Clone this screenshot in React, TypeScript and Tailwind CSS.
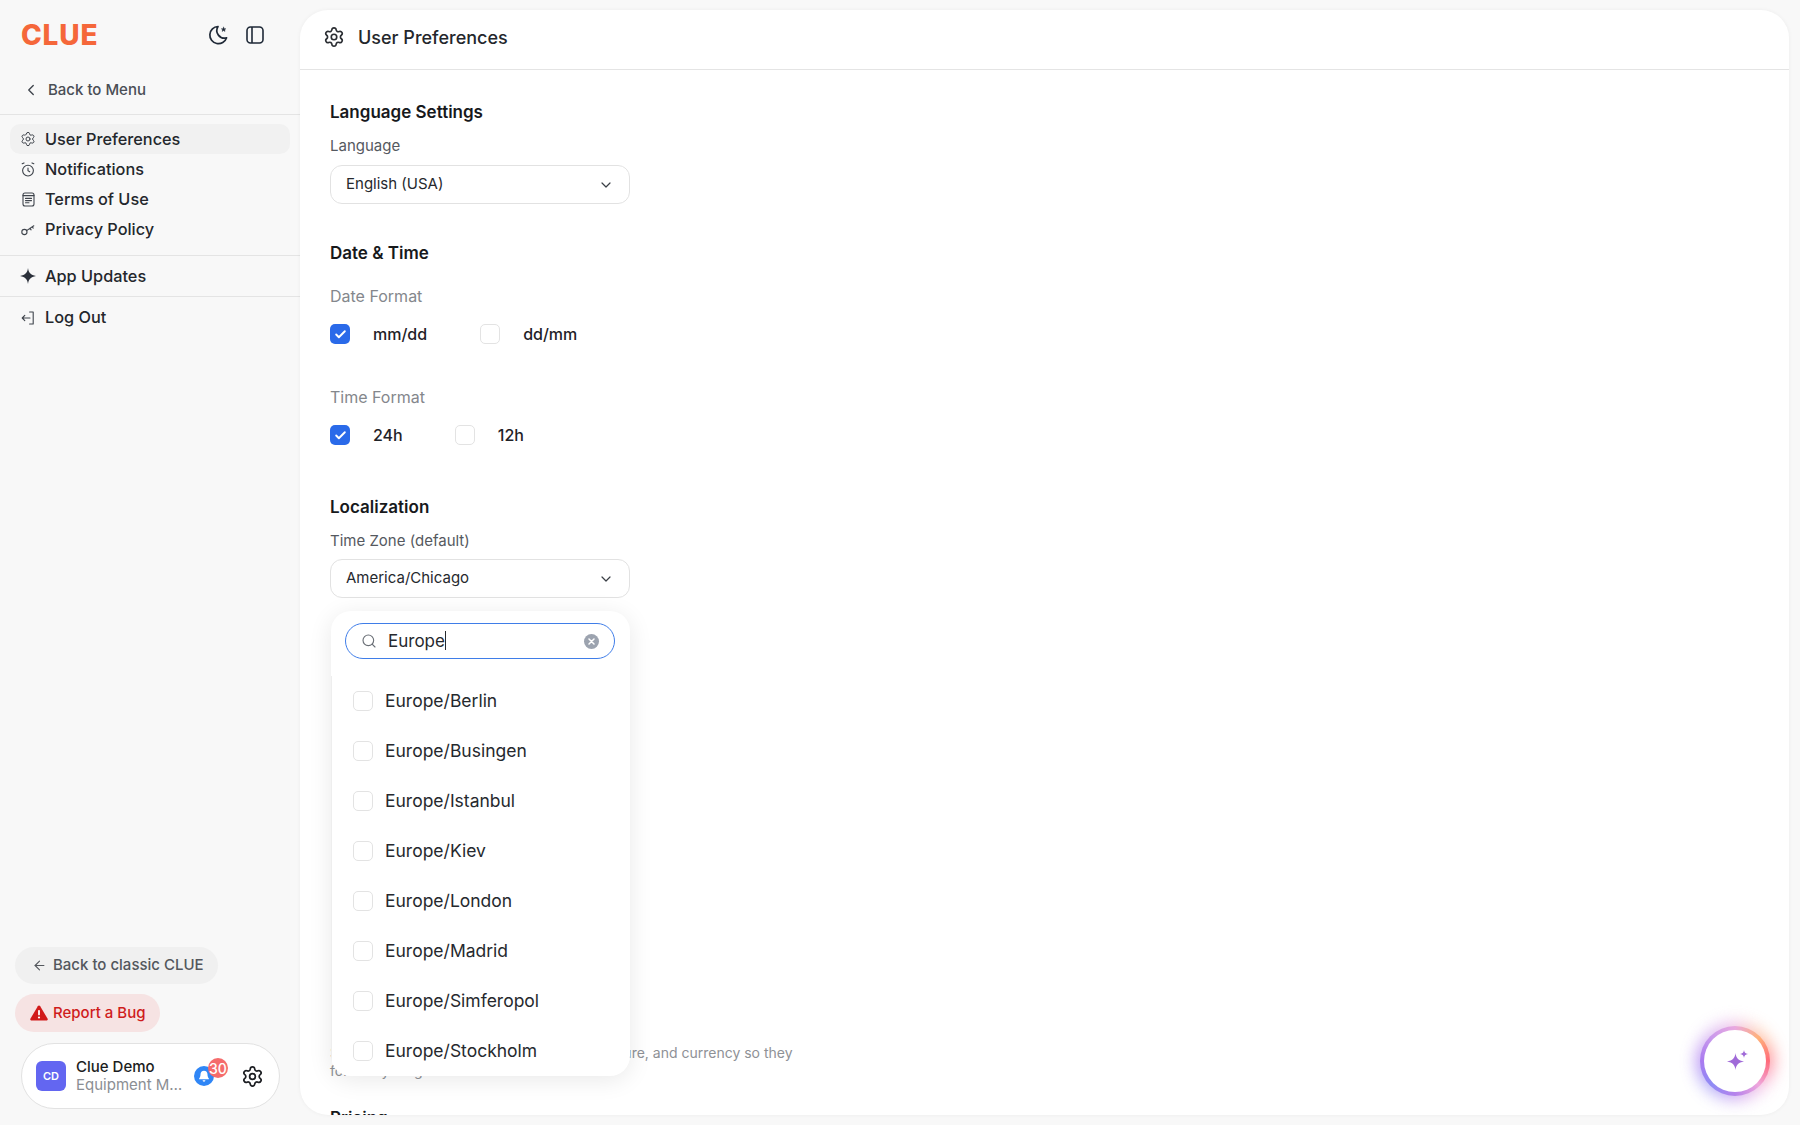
import { ChevronDown, ChevronLeft, ArrowLeft, Check, Search, Settings } from 'lucide-react'

const font = { fontFamily: 'Inter, "Noto Sans", sans-serif' }

const zones = [
  'Europe/Berlin',
  'Europe/Busingen',
  'Europe/Istanbul',
  'Europe/Kiev',
  'Europe/London',
  'Europe/Madrid',
  'Europe/Simferopol',
  'Europe/Stockholm',
]

function MoonStar() {
  return (
    <svg width="22" height="22" viewBox="0 0 22 22" fill="none" stroke="#1f2937" strokeWidth="1.7" strokeLinecap="round" strokeLinejoin="round">
      <path d="M11 2.5a8.6 8.6 0 1 0 8.6 11.3A7.6 7.6 0 0 1 11 2.5Z" />
      <path d="M16.6 3.2l.6 1.5 1.6.1-1.2 1 .4 1.6-1.4-.9-1.4.9.4-1.6-1.2-1 1.6-.1Z" fill="#1f2937" strokeWidth="0.5" />
    </svg>
  )
}

function PanelIcon() {
  return (
    <svg width="18" height="18" viewBox="0 0 18 18" fill="none" stroke="#1f2937" strokeWidth="1.6">
      <rect x="1" y="1" width="16" height="16" rx="3.5" />
      <path d="M6 1v16" />
    </svg>
  )
}

function AlarmIcon() {
  return (
    <svg width="14" height="15" viewBox="0 0 14 15" fill="none" stroke="#3f444c" strokeWidth="1.1" strokeLinecap="round">
      <circle cx="7" cy="8.6" r="5.4" />
      <path d="M7 6v2.8l1.7 1" />
      <path d="M1.2 1.8 3 .9M12.8 1.8 11 .9" />
    </svg>
  )
}

function DocIcon() {
  return (
    <svg width="13" height="15" viewBox="0 0 13 15" fill="none" stroke="#3f444c" strokeWidth="1.1" strokeLinecap="round">
      <rect x="1" y="1" width="11" height="13" rx="2" />
      <path d="M1 3.6h11M3.5 6.4h6M3.5 8.6h6M3.5 10.8h3.5" />
    </svg>
  )
}

function KeyIcon() {
  return (
    <svg width="14" height="13" viewBox="0 0 14 13" fill="none" stroke="#3f444c" strokeWidth="1.1" strokeLinecap="round">
      <circle cx="3.400" cy="9" r="2.600" />
      <path d="M5.600 7.600 12.800 2.800M9 5.300l1.100 1.500M11.200 3.800l1 1.300" />
    </svg>
  )
}

function LogOutIcon() {
  return (
    <svg width="14" height="14" viewBox="0 0 14 14" fill="none" stroke="#3f444c" strokeWidth="1.1" strokeLinecap="round" strokeLinejoin="round">
      <path d="M8.600 1h3.600v12H8.600" />
      <path d="M9 7H1.200M3.800 4.300 1.200 7l2.600 2.700" />
    </svg>
  )
}

function Spark({ size = 16, color = '#2b303a' }: { size?: number; color?: string }) {
  return (
    <svg width={size} height={size} viewBox="0 0 16 16" fill={color}>
      <path d="M8 0c.5 4.600 2.600 7 8 8-5.400 1-7.500 3.400-8 8-.5-4.600-2.600-7-8-8 5.400-1 7.500-3.400 8-8Z" />
    </svg>
  )
}

function Warning() {
  return (
    <svg width="18" height="16" viewBox="0 0 18 16">
      <path d="M9 .6c.5 0 .9.3 1.200.7l7.400 12.400c.5.900-.1 1.900-1.100 1.900H1.500c-1 0-1.600-1-1.100-1.900L7.800 1.300C8.100.9 8.500.6 9 .6Z" fill="#d11a1a" />
      <rect x="8.100" y="5" width="1.800" height="5.400" rx=".8" fill="#fff" />
      <circle cx="9" cy="12.500" r="1.100" fill="#fff" />
    </svg>
  )
}

function Box({ checked = false }: { checked?: boolean }) {
  if (checked) {
    return (
      <span className="flex h-5 w-5 shrink-0 items-center justify-center rounded-[5px] bg-[#2a6ae9]">
        <Check size={13} color="#fff" strokeWidth={3.500} />
      </span>
    )
  }
  return <span className="h-5 w-5 shrink-0 rounded-[5px] border border-[#e3e3e3] bg-white" />
}

function Heading({ children }: { children: string }) {
  return <h2 className="text-[17px] leading-6 font-semibold text-[#17191c]">{children}</h2>
}

function SelectBox({ value }: { value: string }) {
  return (
    <div className="flex h-[39px] w-[300px] items-center justify-between rounded-xl border border-[#e2e2e2] bg-white pr-[15px] pl-[15px] text-[15px] text-[#26292e]">
      <span>{value}</span>
      <ChevronDown size={16} color="#3a3f46" strokeWidth={1.8} />
    </div>
  )
}

function FormatRow({ title, options, second }: { title: string; options: [string, string]; second: string }) {
  return (
    <div>
      <div className="text-[16px] leading-6 text-[#84878c]">{title}</div>
      <div className="mt-[16px] flex h-5 items-center text-[16px] font-medium text-[#1f2227]">
        <Box checked />
        <span className="ml-[23px]">{options[0]}</span>
        <span className={`flex items-center ${second}`}>
          <Box />
          <span className="ml-[23px]">{options[1]}</span>
        </span>
      </div>
    </div>
  )
}

function NavRow({ icon, label, active }: { icon: React.ReactNode; label: string; active?: boolean }) {
  return (
    <div className={`mx-[10px] flex h-[30px] items-center rounded-[10px] ${active ? 'bg-[#f1f1f1]' : ''}`}>
      <span className="flex w-[35px] shrink-0 items-center justify-center pl-[1px]">{icon}</span>
      <span className="text-[16.300px] font-medium text-[#24272c]">{label}</span>
    </div>
  )
}

function Sidebar() {
  return (
    <aside className="flex h-full w-[300px] shrink-0 flex-col">
      <div className="flex h-[70px] items-center justify-between pr-[36px] pl-[21px]">
        <span className="text-[28px] leading-none font-extrabold tracking-[0.8px] text-[#f5673a]">CLUE</span>
        <div className="flex items-center gap-[17px]">
          <MoonStar />
          <PanelIcon />
        </div>
      </div>
      <div className="flex h-[45px] items-center border-b border-[#e4e4e4] pb-[4px] pl-[22px] text-[15px] font-medium text-[#4a4e55]">
        <ChevronLeft size={18} color="#3f444c" strokeWidth={1.8} />
        <span className="ml-[8px]">Back to Menu</span>
      </div>
      <nav className="border-b border-[#e4e4e4] pt-[9px] pb-[11px]">
        <NavRow active icon={<Settings size={16} color="#3f444c" strokeWidth={1.5} />} label="User Preferences" />
        <NavRow icon={<AlarmIcon />} label="Notifications" />
        <NavRow icon={<DocIcon />} label="Terms of Use" />
        <NavRow icon={<KeyIcon />} label="Privacy Policy" />
      </nav>
      <div className="flex h-[41px] items-center border-b border-[#e4e4e4]">
        <div className="w-full">
          <NavRow icon={<Spark />} label="App Updates" />
        </div>
      </div>
      <div className="flex h-[41px] items-center">
        <div className="w-full">
          <NavRow icon={<LogOutIcon />} label="Log Out" />
        </div>
      </div>
      <div className="mt-auto pb-[16px] pl-[15px]">
        <div className="flex h-[37px] w-[203px] items-center gap-[6px] rounded-full bg-[#f0f0f0] pl-[17px] text-[15px] font-medium text-[#53575d]">
          <ArrowLeft size={15} color="#53575d" strokeWidth={1.8} />
          Back to classic CLUE
        </div>
        <div className="mt-[10px] flex h-[38px] w-[145px] items-center gap-[5px] rounded-full bg-[#f6e3e3] pl-[15px] text-[15px] font-medium text-[#cf1c1c]">
          <Warning />
          Report a Bug
        </div>
        <div className="mt-[11px] ml-[6px] flex h-[66px] w-[259px] items-center rounded-full border border-[#e2e2e2] bg-white pl-[14px]">
          <span className="flex h-[30px] w-[30px] items-center justify-center rounded-[6px] bg-[#6366f1] text-[11px] font-semibold text-white">CD</span>
          <div className="ml-[10px] w-[118px] shrink-0 pr-[10px] leading-[18px]">
            <div className="text-[15px] font-medium text-[#1b1d21]">Clue Demo</div>
            <div className="truncate text-[15px] text-[#8b8e93]">Equipment Manager</div>
          </div>
          <span className="relative h-5 w-5 shrink-0">
            <span className="flex h-5 w-5 items-center justify-center rounded-full bg-[#2f86f6]">
              <svg width="12" height="13" viewBox="0 0 12 13" fill="#fff">
                <path d="M6 .8c-2.200 0-3.500 1.700-3.500 3.800 0 2-.6 3-1.300 3.800-.3.300-.1.800.3.800h9c.4 0 .6-.5.3-.800-.7-.8-1.300-1.800-1.300-3.800C9.500 2.500 8.200.8 6 .8ZM4.600 10.300h2.800a1.400 1.400 0 0 1-2.800 0Z" />
              </svg>
            </span>
            <span className="absolute -top-[8px] left-[14px] flex h-5 w-5 items-center justify-center rounded-full bg-[#f56c6c] text-[14px] font-medium text-white">30</span>
          </span>
          <span className="ml-[27px]">
            <Settings size={23} color="#1b1d21" strokeWidth={1.8} />
          </span>
        </div>
      </div>
    </aside>
  )
}

function ZoneDropdown() {
  return (
    <div className="absolute top-[calc(100%+13px)] left-[1px] z-10 h-[465px] w-[299px] overflow-hidden rounded-[20px] bg-white shadow-[0_4px_24px_rgba(0,0,0,0.09)]">
      <div className="pt-[12px] pr-[15px] pb-[17px] pl-[14px]">
        <div className="flex h-[36px] items-center rounded-full border-[1.500px] border-[#3f7de8] pr-[15px] pl-[15px]">
          <Search size={16} color="#6b7077" strokeWidth={1.7} />
          <span className="ml-[11px] flex-1 text-[17px] text-[#26292e]">
            Europe<span className="inline-block h-[19px] w-px translate-y-[3px] bg-[#26292e]" />
          </span>
          <span className="flex h-[15px] w-[15px] items-center justify-center rounded-full bg-[#9ca3af]">
            <svg width="7" height="7" viewBox="0 0 7 7" stroke="#fff" strokeWidth="1.500" strokeLinecap="round">
              <path d="M1 1l5 5M6 1 1 6" />
            </svg>
          </span>
        </div>
      </div>
      <ul className="border-l border-[#eeeeee]">
        {zones.map((z) => (
          <li key={z} className="flex h-[50px] items-center pl-[21px] text-[17.500px] text-[#26292e]">
            <Box />
            <span className="ml-[12px]">{z}</span>
          </li>
        ))}
      </ul>
    </div>
  )
}

function AiButton() {
  return (
    <div className="absolute right-[19px] bottom-[19px] h-[70px] w-[70px]">
      <div className="absolute inset-[-4px] rounded-full bg-[conic-gradient(#e9a8e0,#ffb27a_45deg,#ff5f70_90deg,#efa6dc_135deg,#b583ec_180deg,#8f8cf5_225deg,#a06cf0_270deg,#c99aec_315deg,#e9a8e0)] opacity-70 blur-[8px]" />
      <div className="relative h-full w-full rounded-full bg-[conic-gradient(#e9a8e0,#ffb27a_45deg,#ff6b7a_90deg,#efa6dc_135deg,#b583ec_180deg,#8f8cf5_225deg,#a97af0_270deg,#c99aec_315deg,#e9a8e0)] p-[4px]">
        <div className="relative flex h-full w-full items-center justify-center rounded-full bg-white">
          <Spark size={17} color="#a06ad8" />
          <span className="absolute top-[20px] left-[36px]">
            <Spark size={8} color="#a06ad8" />
          </span>
        </div>
      </div>
    </div>
  )
}

function Preferences() {
  return (
    <main className="relative my-[10px] mr-[11px] flex-1 overflow-hidden rounded-[28px] bg-white shadow-[0_0_4px_rgba(0,0,0,0.05)]">
      <header className="flex h-[60px] items-center border-b border-[#e4e4e4] pb-[5px] pl-[23px]">
        <Settings size={22} color="#2b2e33" strokeWidth={1.8} />
        <h1 className="ml-[13px] text-[18px] font-medium text-[#24272c]">User Preferences</h1>
      </header>
      <div className="px-[30px] pt-[30px]">
        <Heading>Language Settings</Heading>
        <div className="mt-[12px] mb-[9px] text-[15px] leading-5 text-[#555960]">Language</div>
        <SelectBox value="English (USA)" />

        <div className="mt-[37px]">
          <Heading>Date &amp; Time</Heading>
        </div>
        <div className="mt-[19px]">
          <FormatRow title="Date Format" options={['mm/dd', 'dd/mm']} second="ml-[53px]" />
        </div>
        <div className="mt-[41px]">
          <FormatRow title="Time Format" options={['24h', '12h']} second="ml-[52px]" />
        </div>

        <div className="mt-[50px]">
          <Heading>Localization</Heading>
        </div>
        <div className="mt-[12px] mb-[8px] text-[15px] leading-5 text-[#555960]">Time Zone (default)</div>
        <div className="relative w-[300px]">
          <SelectBox value="America/Chicago" />
          <ZoneDropdown />
        </div>

        <p className="mt-[446px] text-[14px] leading-[18px] whitespace-nowrap text-[#8e9196]">
          Select your default units of weight, temperature, and currency so they
          <br />
          for everything
        </p>
        <div className="mt-[26px]">
          <Heading>Pricing</Heading>
        </div>
      </div>
      <AiButton />
    </main>
  )
}

export default function App() {
  return (
    <div className="flex h-screen w-full overflow-hidden bg-[#f8f8f8]" style={font}>
      <Sidebar />
      <Preferences />
    </div>
  )
}
